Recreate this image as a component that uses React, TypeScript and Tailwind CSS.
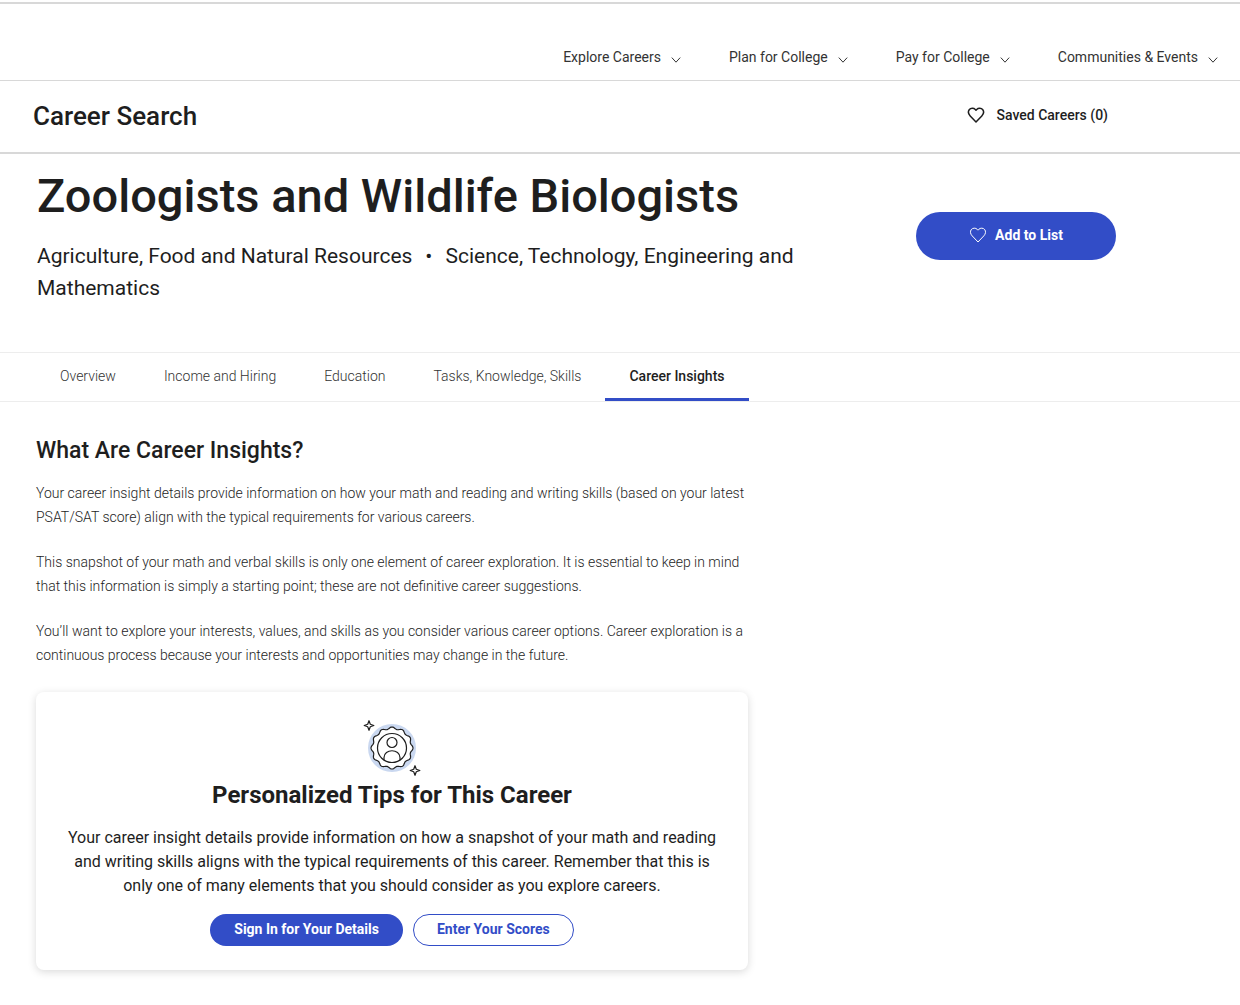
import React from "react";

const navItems = ["Explore Careers", "Plan for College", "Pay for College", "Communities & Events"];
const tabs = ["Overview", "Income and Hiring", "Education", "Tasks, Knowledge, Skills", "Career Insights"];

function Chevron() {
  return (
    <svg width="10" height="6" viewBox="0 0 10 6" fill="none" stroke="#333" strokeWidth="1" aria-hidden="true" className="mt-[5px]">
      <path d="M0.8 0.6 5 5.2 9.2 0.6" />
    </svg>
  );
}

function Heart({ width = 1.5 }: { width?: number }) {
  return (
    <svg width="18" height="16" viewBox="0 0 18 16" fill="none" stroke="currentColor" strokeWidth={width} strokeLinejoin="round" aria-hidden="true">
      <path d="M9 15 3.200 8.900C1.300 6.900 1 4.400 2.200 2.700 3.700 0.700 6.700 0.700 8.300 2.400L9 3.200 9.700 2.400C11.300 0.700 14.300 0.700 15.800 2.700 17 4.400 16.700 6.900 14.800 8.900Z" />
    </svg>
  );
}

/* Wavy outline of the seal: twelve rounded lobes around its centre. */
const sealPoints = Array.from({ length: 144 }, (_, i) => {
  const angle = (i / 144) * Math.PI * 2;
  const radius = 20 + Math.cos(12 * angle);
  return `${(29 + radius * Math.cos(angle)).toFixed(2)},${(28 + radius * Math.sin(angle)).toFixed(2)}`;
}).join(" ");

function BadgeIcon() {
  return (
    <svg width="58" height="56" viewBox="0 0 58 56" fill="none" stroke="#1e1e1e" strokeWidth="1.2" strokeLinejoin="round" aria-hidden="true">
      <circle cx="29" cy="28" r="24" fill="#cad8f0" stroke="none" />
      <polygon points={sealPoints} fill="#fff" />
      <circle cx="29" cy="28" r="14.500" />
      <circle cx="29" cy="22.500" r="5" />
      <path d="M21 40V37.500C21 28.500 37 28.500 37 37.500V40" />
      <path d="M6 0.700 7.300 4.200 10.800 5.500 7.300 6.800 6 10.300 4.700 6.800 1.200 5.500 4.700 4.200ZM52 45.700 53.300 49.200 56.800 50.500 53.300 51.800 52 55.300 50.700 51.800 47.200 50.500 50.700 49.200Z" fill="#fff" />
    </svg>
  );
}

export default function App() {
  return (
    <div className="bg-white font-['Roboto',sans-serif] text-[#1e1e1e]">
      <header className="mt-0.5 border-t-2 border-[#d8d8d8]">
        <nav aria-label="Main" className="flex h-[77px] items-end justify-end gap-12 border-b border-[#d8d8d8] pr-[22px] pb-[13px] text-sm leading-5 text-[#333]">
          {navItems.map((item) => (
            <button key={item} type="button" className="flex items-center gap-[10px]">
              {item}
              <Chevron />
            </button>
          ))}
        </nav>
        <div className="flex h-[73px] items-center justify-between border-b-2 border-[#d8d8d8] pr-[132px] pb-[2px] pl-[33px]">
          <p className="text-[26px] leading-8 font-medium">Career Search</p>
          <a href="#saved" className="flex items-center gap-3 pb-[2px] text-sm leading-5 font-medium">
            <Heart />
            Saved Careers (0)
          </a>
        </div>
      </header>
      <main>
        <section className="flex items-start justify-between pt-3 pr-[124px] pb-12 pl-[37px]">
          <div className="max-w-[780px]">
            <h1 className="text-[47px] leading-[60px] font-medium">Zoologists and Wildlife Biologists</h1>
            <p className="mt-[14px] text-[21px] leading-8">
              Agriculture, Food and Natural Resources
              <span className="mx-[13px]">•</span>
              Science, Technology, Engineering and Mathematics
            </p>
          </div>
          <button type="button" className="mt-[46px] flex h-12 w-[200px] shrink-0 items-center justify-center gap-2 rounded-full bg-[#324dc7] pb-[2px] text-sm font-bold text-white">
            <Heart width={1} />
            Add to List
          </button>
        </section>
        <nav aria-label="Career sections" className="flex h-[50px] border-y border-[#ededed] pl-9 text-sm font-light text-[#333]">
          {tabs.map((tab, i) => (
            <a key={tab} href="#" className={i === 4 ? "flex items-center border-b-3 border-[#324dc7] px-6 font-medium text-[#1e1e1e]" : "flex items-center px-6 pb-[3px]"}>
              {tab}
            </a>
          ))}
        </nav>
        <section className="ml-9 max-w-[712px] pt-[33px] pb-9">
          <h2 className="text-[23px] leading-8 font-medium">What Are Career Insights?</h2>
          <div className="mt-[14px] flex flex-col gap-[21px] text-sm leading-6 font-light">
            <p>Your career insight details provide information on how your math and reading and writing skills (based on your latest PSAT/SAT score) align with the typical requirements for various careers.</p>
            <p>This snapshot of your math and verbal skills is only one element of career exploration. It is essential to keep in mind that this information is simply a starting point; these are not definitive career suggestions.</p>
            <p>You’ll want to explore your interests, values, and skills as you consider various career options. Career exploration is a continuous process because your interests and opportunities may change in the future.</p>
          </div>
          <div className="mt-[25px] flex flex-col items-center rounded-lg px-7 pt-7 pb-6 text-center shadow-[0_2px_8px_rgba(0,0,0,0.15)]">
            <BadgeIcon />
            <h3 className="mt-[3px] text-2xl leading-8 font-bold">Personalized Tips for This Career</h3>
            <p className="mt-[15px] text-base leading-6">Your career insight details provide information on how a snapshot of your math and reading and writing skills aligns with the typical requirements of this career. Remember that this is only one of many elements that you should consider as you explore careers.</p>
            <div className="mt-4 flex gap-[10px] text-sm font-bold">
              <button type="button" className="h-8 rounded-full bg-[#324dc7] px-6 pb-[2px] text-white">Sign In for Your Details</button>
              <button type="button" className="h-8 rounded-full border border-[#324dc7] px-[23px] pb-[2px] text-[#324dc7]">Enter Your Scores</button>
            </div>
          </div>
        </section>
      </main>
    </div>
  );
}
